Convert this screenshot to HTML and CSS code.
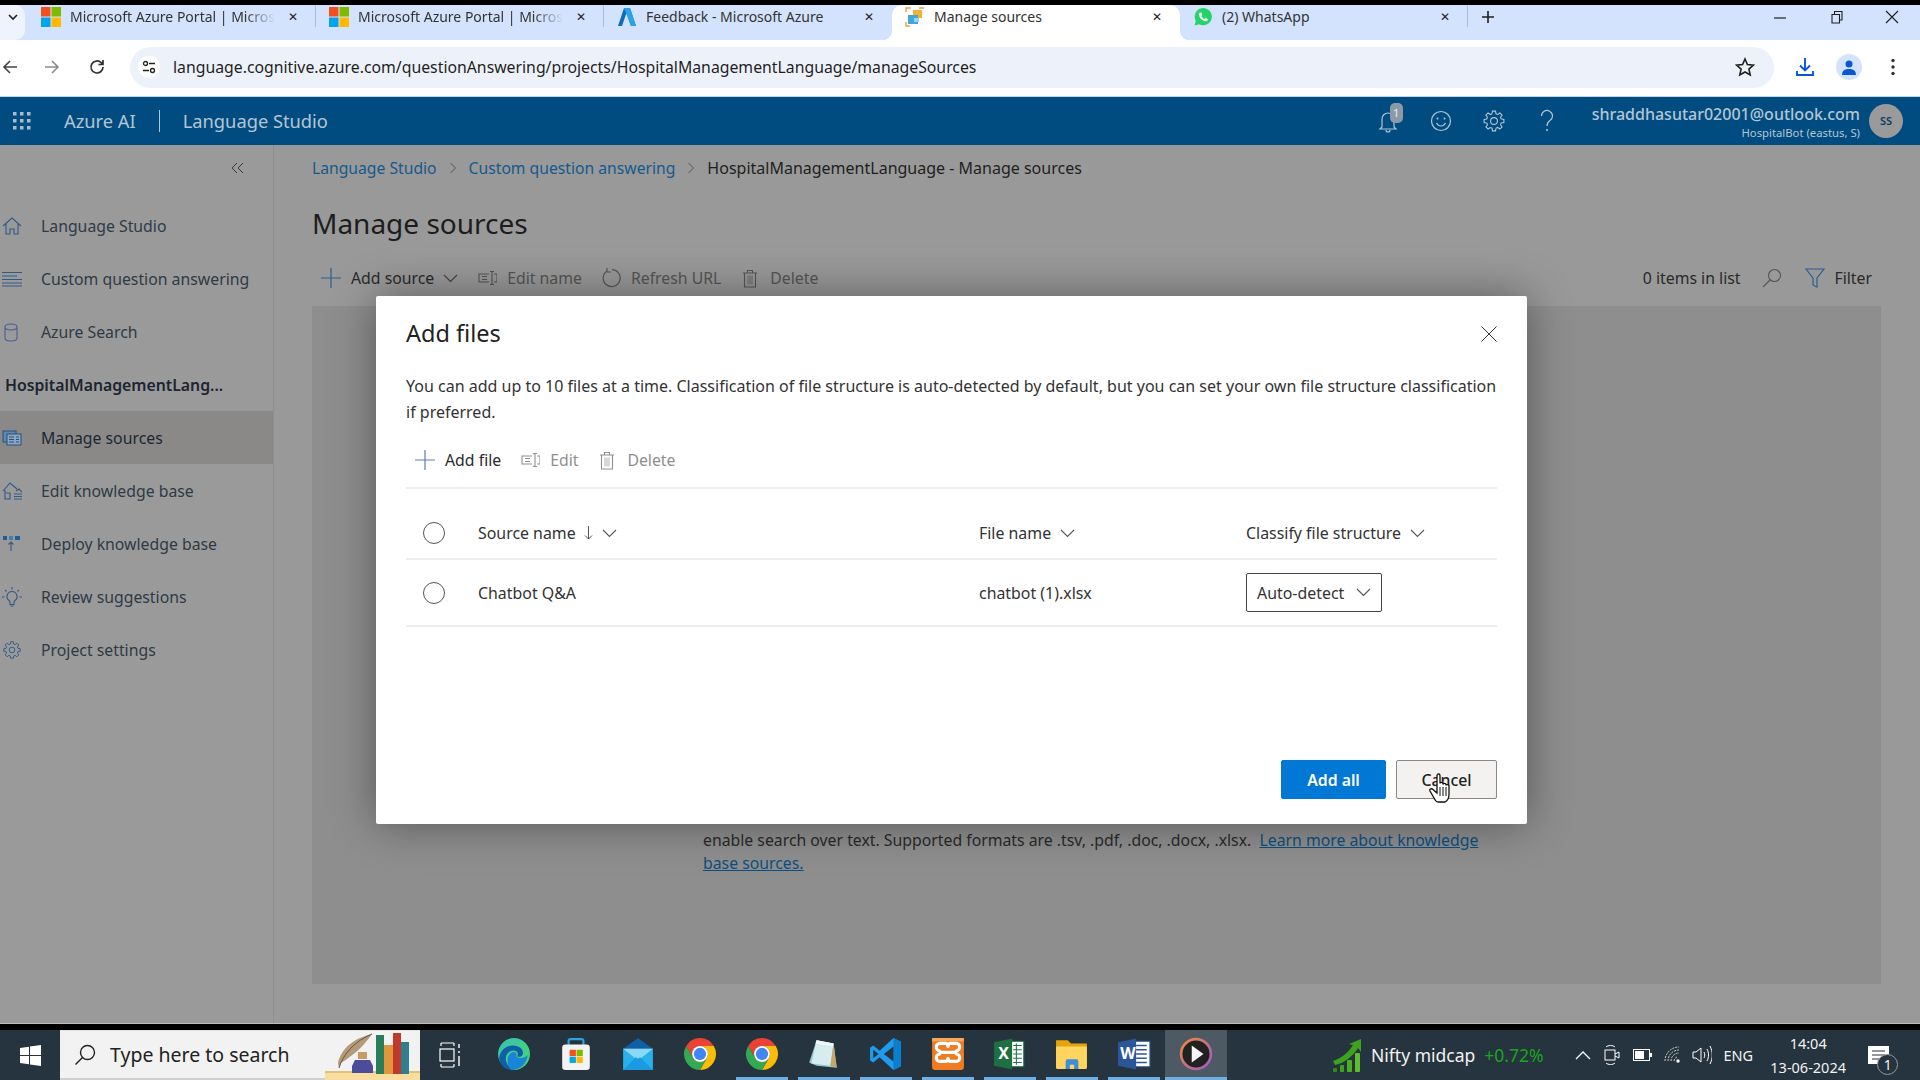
FILE: index.html
```html
<!DOCTYPE html>
<html lang="en">
<head>
<meta charset="utf-8">
<title>Manage sources</title>
<link rel="stylesheet" href="styles.css">
</head>
<body>
<svg class="defs" width="0" height="0" aria-hidden="true">
  <defs>
    <g id="gear-tooth"><path d="M10.06 4.76L10.44 2.12H13.56L13.94 4.76L15.75 5.5"/></g>
    <g id="gear" fill="none" stroke="currentColor" stroke-width="1.1">
      <use href="#gear-tooth"/>
      <use href="#gear-tooth" transform="rotate(45 12 12)"/>
      <use href="#gear-tooth" transform="rotate(90 12 12)"/>
      <use href="#gear-tooth" transform="rotate(135 12 12)"/>
      <use href="#gear-tooth" transform="rotate(180 12 12)"/>
      <use href="#gear-tooth" transform="rotate(225 12 12)"/>
      <use href="#gear-tooth" transform="rotate(270 12 12)"/>
      <use href="#gear-tooth" transform="rotate(315 12 12)"/>
      <circle cx="12" cy="12" r="3.4"/>
    </g>
    <g id="ms"><rect x="0" y="0" width="9.5" height="9.5" fill="#f25022"/><rect x="10.5" y="0" width="9.5" height="9.5" fill="#7fba00"/><rect x="0" y="10.5" width="9.5" height="9.5" fill="#00a4ef"/><rect x="10.5" y="10.5" width="9.5" height="9.5" fill="#ffb900"/></g>
    <g id="trash" fill="none" stroke="currentColor" stroke-width="1.1"><path d="M3.5 5h11v14h-11zM2 5h14M6.5 5V2.5h5V5"/><rect x="6" y="7.5" width="6" height="9" fill="currentColor" opacity=".35" stroke="none"/></g>
    <g id="rename" fill="none" stroke="currentColor" stroke-width="1.1"><path d="M12 4H2v8h10M5 6.5h5M5 9.5h5M15 1.5v13M13 1.5h4M13 14.5h4M17 4h3v8h-3"/></g>
    <path id="chev" d="M1 1l6.5 6.5L14 1" fill="none" stroke="currentColor" stroke-width="1.1"/>
  </defs>
</svg>

<div class="topline"></div>

<div class="tabstrip">
  <div class="tab-menu"><svg width="10" height="7" viewBox="0 0 10 7"><path d="M1 1l4 4 4-4" fill="none" stroke="#1f1f1f" stroke-width="1.6"/></svg></div>
  <div class="tab sep">
    <svg class="fav" viewBox="0 0 20 20"><use href="#ms"/></svg>
    <span class="tab-title fade">Microsoft Azure Portal | Micros</span><span class="tab-x">✕</span>
  </div>
  <div class="tab sep">
    <svg class="fav" viewBox="0 0 20 20"><use href="#ms"/></svg>
    <span class="tab-title fade">Microsoft Azure Portal | Micros</span><span class="tab-x">✕</span>
  </div>
  <div class="tab">
    <svg class="fav" viewBox="0 0 20 20"><path d="M7 1h6l6 18h-5L9.500 6 5 19H1z" fill="#0f6cbd"/><path d="M7 1h6l6 18h-5z" fill="#2aa4e8"/></svg>
    <span class="tab-title">Feedback - Microsoft Azure</span><span class="tab-x">✕</span>
  </div>
  <div class="tab active">
    <svg class="fav" viewBox="0 0 20 20"><path d="M1 5V1h5M14 1h5M1 15v4h4" fill="none" stroke="#f0a040" stroke-width="1.400"/><rect x="8" y="3" width="9" height="8" fill="#f2b233"/><rect x="3" y="8" width="10" height="9" fill="#3fa7dc"/><rect x="9" y="11" width="5" height="4" fill="#9ad3ef"/></svg>
    <span class="tab-title">Manage sources</span><span class="tab-x">✕</span>
  </div>
  <div class="tab sep">
    <svg class="fav" viewBox="0 0 20 20"><path d="M1.500 18.500l1.300-4.600A8.600 8.600 0 1 1 6.200 17.200z" fill="#25d366"/><path d="M7 5.500c-1 .6-1.400 1.900-.8 3.400 1 2.400 2.800 4.300 5.200 5.200 1.400.5 2.700.1 3.200-.9.200-.5.200-1 .1-1.200l-2.300-1.100-1 1.200c-1.400-.6-2.500-1.700-3.100-3l1-1.100-1-2.400z" fill="#fff"/></svg>
    <span class="tab-title">(2) WhatsApp</span><span class="tab-x">✕</span>
  </div>
  <div class="new-tab"><svg width="14" height="14" viewBox="0 0 14 14"><path d="M7 1v12M1 7h12" stroke="#1f1f1f" stroke-width="1.600"/></svg></div>
  <div class="win-ctrls">
    <svg class="win-ic" viewBox="0 0 14 14"><path d="M1 8h12" stroke="#1f1f1f" stroke-width="1.200"/></svg>
    <svg class="win-ic" viewBox="0 0 14 14"><path d="M3 4.500h7.500V13H3zM5.500 4.500V1.500H13V10h-2.500" fill="none" stroke="#1f1f1f" stroke-width="1.100"/></svg>
    <svg class="win-ic" viewBox="0 0 14 14"><path d="M1 1l12 12M13 1L1 13" stroke="#1f1f1f" stroke-width="1.100"/></svg>
  </div>
</div>

<div class="toolbar">
  <div class="nav-btn first"><svg width="16" height="16" viewBox="0 0 16 16"><path d="M15 8H2M8 2L2 8l6 6" fill="none" stroke="#444" stroke-width="1.600"/></svg></div>
  <div class="nav-btn"><svg width="16" height="16" viewBox="0 0 16 16"><path d="M1 8h13M8 2l6 6-6 6" fill="none" stroke="#8a8a8a" stroke-width="1.600"/></svg></div>
  <div class="nav-btn reload"><svg width="18" height="18" viewBox="0 0 18 18"><path d="M15 9a6 6 0 1 1-1.800-4.300L15 6.500M15 2v4.500h-4.500" fill="none" stroke="#333" stroke-width="1.700"/></svg></div>
  <div class="omnibox">
    <div class="site-ic"><svg width="14" height="14" viewBox="0 0 14 14"><circle cx="3.500" cy="3.500" r="2" fill="none" stroke="#1f1f1f" stroke-width="1.300"/><path d="M7 3.500h6M1 10.500h6" stroke="#1f1f1f" stroke-width="1.300"/><circle cx="10.500" cy="10.500" r="2" fill="none" stroke="#1f1f1f" stroke-width="1.300"/></svg></div>
    <span class="url">language.cognitive.azure.com/questionAnswering/projects/HospitalManagementLanguage/manageSources</span>
    <svg class="star" width="20" height="20" viewBox="0 0 20 20"><path d="M10 2l2.400 5.500 6 .6-4.500 4 1.300 5.900L10 15l-5.200 3 1.300-5.900-4.500-4 6-.6z" fill="none" stroke="#1f1f1f" stroke-width="1.600"/></svg>
  </div>
  <div class="tool-btn"><svg width="20" height="20" viewBox="0 0 20 20"><path d="M10 1v12M5 8.500l5 5 5-5M2 14v4h16v-4" fill="none" stroke="#0b57d0" stroke-width="1.900"/></svg></div>
  <div class="tool-btn"><span class="profile"><svg width="14" height="15" viewBox="0 0 14 15"><circle cx="7" cy="4" r="3.500" fill="#0b57d0"/><path d="M0 15c0-4.500 3-6 7-6s7 1.500 7 6z" fill="#0b57d0"/></svg></span></div>
  <div class="tool-btn"><svg width="4" height="18" viewBox="0 0 4 18"><circle cx="2" cy="2.500" r="1.700" fill="#333"/><circle cx="2" cy="9" r="1.700" fill="#333"/><circle cx="2" cy="15.500" r="1.700" fill="#333"/></svg></div>
</div>

<header class="appbar">
  <svg class="waffle" width="18" height="18" viewBox="0 0 18 18"><g fill="#a9bccb"><rect x="0" y="0" width="3.500" height="3.500"/><rect x="7" y="0" width="3.500" height="3.500"/><rect x="14" y="0" width="3.500" height="3.500"/><rect x="0" y="7" width="3.500" height="3.500"/><rect x="7" y="7" width="3.500" height="3.500"/><rect x="14" y="7" width="3.500" height="3.500"/><rect x="0" y="14" width="3.500" height="3.500"/><rect x="7" y="14" width="3.500" height="3.500"/><rect x="14" y="14" width="3.500" height="3.500"/></g></svg>
  <span class="brand">Azure AI</span><span class="brand-sep"></span><span class="brand">Language Studio</span>
  <div class="appbar-right">
    <span class="bar-ic bell">
      <svg width="22" height="24" viewBox="0 0 22 24"><path d="M5 18V10a6 6 0 0 1 12 0v8l2 2H3zM9 21a2 2 0 0 0 4 0" fill="none" stroke="#b4c5d3" stroke-width="1.200"/></svg>
      <span class="bell-badge">1</span>
    </span>
    <span class="bar-ic"><svg width="22" height="22" viewBox="0 0 22 22"><circle cx="11" cy="11" r="9.500" fill="none" stroke="#b4c5d3" stroke-width="1.200"/><circle cx="7.500" cy="8.500" r="1" fill="#b4c5d3"/><circle cx="14.500" cy="8.500" r="1" fill="#b4c5d3"/><path d="M6.500 13c1.200 2.200 2.700 3 4.500 3s3.300-.8 4.500-3" fill="none" stroke="#b4c5d3" stroke-width="1.200"/></svg></span>
    <span class="bar-ic light"><svg width="24" height="24" viewBox="0 0 24 24"><use href="#gear"/></svg></span>
    <span class="bar-ic"><svg width="14" height="24" viewBox="0 0 14 24"><path d="M1.500 7a5.500 5.500 0 1 1 8.500 4.600C8 13 7 14 7 17" fill="none" stroke="#b4c5d3" stroke-width="1.200"/><circle cx="7" cy="21" r="1" fill="#b4c5d3"/></svg></span>
    <div class="account">
      <div class="email">shraddhasutar02001@outlook.com</div>
      <div class="resource">HospitalBot (eastus, S)</div>
    </div>
    <div class="avatar">SS</div>
  </div>
</header>

<div class="workspace">
  <nav class="sidebar">
    <div class="collapse"><svg width="14" height="12" viewBox="0 0 14 12"><path d="M6 1L1 6l5 5M12 1L7 6l5 5" fill="none" stroke="#3a3a3a" stroke-width="1"/></svg></div>
    <a class="side-item"><svg class="side-ic" viewBox="0 0 20 20"><path d="M1 10l9-8 9 8M4 8v10h4v-5h4v5h4V8" fill="none" stroke="#2f5a84" stroke-width="1.100"/></svg>Language Studio</a>
    <a class="side-item"><svg class="side-ic" viewBox="0 0 20 20"><path d="M0 3.500h20M0 7h15M0 10.500h20M0 14h20M0 17h20" stroke="#2f5a84" stroke-width="1.100"/></svg>Custom question answering</a>
    <a class="side-item"><svg class="side-ic" viewBox="0 0 20 20"><path d="M3 5v11c0 2 2 3 6 3s6-1 6-3V5M3 5c0-2 2-3 6-3s6 1 6 3-2 3-6 3-6-1-6-3z" fill="none" stroke="#4a5f96" stroke-width="1.100"/></svg>Azure Search</a>
    <div class="side-project">HospitalManagementLang...</div>
    <a class="side-item current"><svg class="side-ic" viewBox="0 0 20 20"><rect x="1" y="3" width="13" height="11" fill="#5f87b0" stroke="#24527e"/><rect x="5" y="6" width="14" height="11" fill="#8aa6c0" stroke="#24527e"/><path d="M7 9h5M7 11.500h5M7 14h5M14 9h3M14 11.500h3M14 14h3" stroke="#24527e"/></svg>Manage sources</a>
    <a class="side-item"><svg class="side-ic" viewBox="0 0 20 20"><path d="M1 10l7-8 7 6M3 9v9h5v-6H4M12 13h8M12 15.500h8M12 18h8M14 10l3-2 3 3" fill="none" stroke="#2f5a84" stroke-width="1.100"/></svg>Edit knowledge base</a>
    <a class="side-item"><svg class="side-ic" viewBox="0 0 20 20"><rect x="1" y="2" width="4" height="4" fill="#1d5f96"/><rect x="7" y="2" width="4" height="4" fill="#4e7ca3"/><rect x="13" y="2" width="5" height="4" fill="#1d5f96"/><path d="M9 17V8M6.500 10.500L9 8l2.500 2.500" fill="none" stroke="#2f5a84" stroke-width="1.100"/></svg>Deploy knowledge base</a>
    <a class="side-item"><svg class="side-ic" viewBox="0 0 20 20"><path d="M10 4.500a5 5 0 0 0-3 9c.7.6 1 1.200 1 2v2h4v-2c0-.8.300-1.400 1-2a5 5 0 0 0-3-9zM8.500 19h3M10 0v2.500M3 3l1.500 1.500M17 3l-1.500 1.500M0 10h2.500M20 10h-2.500" fill="none" stroke="#2f5a84" stroke-width="1.100"/></svg>Review suggestions</a>
    <a class="side-item"><svg class="side-ic gear-blue" viewBox="0 0 24 24"><use href="#gear"/></svg>Project settings</a>
  </nav>

  <main class="content">
    <div class="crumbs">
      <a class="crumb-link">Language Studio</a>
      <svg class="crumb-sep" width="8" height="12" viewBox="0 0 8 12"><path d="M1.500 1l5 5-5 5" fill="none" stroke="#555" stroke-width="1"/></svg>
      <a class="crumb-link">Custom question answering</a>
      <svg class="crumb-sep" width="8" height="12" viewBox="0 0 8 12"><path d="M1.500 1l5 5-5 5" fill="none" stroke="#555" stroke-width="1"/></svg>
      <span class="crumb-here">HospitalManagementLanguage - Manage sources</span>
    </div>
    <h1 class="page-title">Manage sources</h1>
    <div class="commands">
      <span class="cmd"><svg class="cmd-ic" viewBox="0 0 20 20"><path d="M10 0v20M0 10h20" stroke="#2a5f8c" stroke-width="1.200"/></svg>Add source</span>
      <svg class="cmd-chev" viewBox="0 0 15 9"><use href="#chev"/></svg>
      <span class="cmd off"><svg class="cmd-ic" viewBox="0 0 20 16"><use href="#rename"/></svg>Edit name</span>
      <span class="cmd off"><svg class="cmd-ic" viewBox="0 0 20 20"><path d="M6 3a8.500 8.500 0 1 0 5-1.400M6 0v4h4" fill="none" stroke="currentColor" stroke-width="1.200"/></svg>Refresh URL</span>
      <span class="cmd off"><svg class="cmd-ic" viewBox="0 0 18 20"><use href="#trash"/></svg>Delete</span>
      <span class="cmd-right">
        <span class="count">0 items in list</span>
        <svg class="find-ic" viewBox="0 0 20 20"><circle cx="12.500" cy="7.500" r="6" fill="none" stroke="#555" stroke-width="1.100"/><path d="M8 12l-7 7" stroke="#555" stroke-width="1.100"/></svg>
        <span class="cmd"><svg class="cmd-ic" viewBox="0 0 20 20"><path d="M1 1h18l-7 9v9l-4-2v-7z" fill="none" stroke="#2a5f8c" stroke-width="1.200"/></svg>Filter</span>
      </span>
    </div>
    <section class="panel">
      <p class="panel-text">enable search over text. Supported formats are .tsv, .pdf, .doc, .docx, .xlsx.&nbsp; <a class="panel-link">Learn more about knowledge</a> <a class="panel-link">base sources.</a></p>
    </section>
  </main>
</div>

<div class="blackline"></div>

<footer class="taskbar">
  <div class="start"><svg width="21" height="21" viewBox="0 0 21 21"><path d="M0 3l9-1.300V10H0zM10 1.500L21 0v10H10zM0 11h9v8.300L0 18zM10 11h11v10l-11-1.500z" fill="#fff"/></svg></div>
  <div class="search">
    <svg width="22" height="22" viewBox="0 0 22 22"><circle cx="13.500" cy="8.500" r="7" fill="none" stroke="#222" stroke-width="1.400"/><path d="M8.500 13.500L1.500 20.500" stroke="#222" stroke-width="1.400"/></svg>
    <span class="search-text">Type here to search</span>
    <svg class="books" width="95" height="50" viewBox="0 0 95 50"><rect x="0" y="41" width="95" height="9" fill="#f7dd9f"/><rect x="0" y="41" width="95" height="2" fill="#e3c278"/><path d="M13 33C16 20 26 9 47 4c-8 12-17 20-31 29l-2 5z" fill="#b49a78"/><path d="M14 38C18 24 30 11 47 4" fill="none" stroke="#6a5640" stroke-width="1"/><rect x="33" y="22" width="9" height="7" fill="#c79a68"/><path d="M30 30h15l3 6v7H27v-7z" fill="#4c4c9a"/><rect x="51" y="5" width="8" height="39" fill="#2a7d5a"/><rect x="59" y="15" width="9" height="29" fill="#e0963a"/><rect x="68" y="3" width="8" height="41" fill="#c0392b"/><rect x="76" y="12" width="8" height="32" fill="#2f7f8f"/></svg>
  </div>
  <div class="task-view"><svg width="22" height="26" viewBox="0 0 22 26"><path d="M2 1h13M2 25h13M2 1v3M15 1v3M2 22v3M15 22v3" fill="none" stroke="#fff" stroke-width="1.200"/><rect x="1" y="7" width="14" height="12" fill="none" stroke="#fff" stroke-width="1.200"/><path d="M20 2v4M20 9v2M20 14v10" stroke="#fff" stroke-width="1.400"/></svg></div>

  <div class="app"><svg class="app-ic" viewBox="0 0 32 32"><defs><linearGradient id="eg1" x1="0" y1="0" x2="1" y2="1"><stop offset="0" stop-color="#35c1b4"/><stop offset="1" stop-color="#4ad96b"/></linearGradient></defs><circle cx="16" cy="16" r="15" fill="url(#eg1)"/><path d="M2 20C3 12 9 8 15 8c6 0 11 4 9 9-1 2-4 2-5 1 2-3-1-6-5-5-5 1-7 6-5 11 1 3 4 6 8 7C8 32 3 27 2 20z" fill="#0f5ea8"/><path d="M10 22c0-5 3-8 6-8 2 0 3 2 2 4 3 3 8 2 11-1-1 8-7 14-15 14-3-2-4-5-4-9z" fill="#1a84d6"/></svg></div>
  <div class="app"><svg class="app-ic" viewBox="0 0 32 32"><path d="M9 9V4a2 2 0 0 1 2-2h10a2 2 0 0 1 2 2v5" fill="none" stroke="#2ba4e0" stroke-width="2"/><rect x="3" y="7" width="26" height="24" rx="3" fill="#f3f3f3"/><g transform="translate(10 12) scale(.62)"><use href="#ms"/></g></svg></div>
  <div class="app"><svg class="app-ic" viewBox="0 0 32 32"><path d="M2 11L16 1l14 10z" fill="#0f5ea8"/><rect x="2" y="11" width="28" height="20" fill="#2bb0ee"/><path d="M2 11l14 11 14-11z" fill="#8ad8f8"/><path d="M2 31l12-12 2 1.500 2-1.500 12 12z" fill="#1a9ae0"/></svg></div>
  <div class="app"><svg class="app-ic" viewBox="0 0 32 32"><use href="#chrome"/></svg></div>
  <div class="app open"><svg class="app-ic" viewBox="0 0 32 32"><g id="chrome"><path d="M3 8.500A15 15 0 0 1 29 8.500L16 8.500A7.500 7.500 0 0 0 9.500 19.750Z" fill="#ea4335"/><path d="M29 8.500A15 15 0 0 1 16 31L22.500 19.750A7.500 7.500 0 0 0 16 8.500Z" fill="#fbbc04"/><path d="M16 31A15 15 0 0 1 3 8.500L9.500 19.750A7.500 7.500 0 0 0 22.500 19.750Z" fill="#34a853"/><circle cx="16" cy="16" r="7.500" fill="#fff"/><circle cx="16" cy="16" r="5.800" fill="#4285f4"/></g></svg></div>
  <div class="app open"><svg class="app-ic" viewBox="0 0 32 32"><path d="M9 3l16 3 3 23-19-2-7-3z" fill="#8fc6d0"/><path d="M9 3l16 3-3 21-18-2z" fill="#d6ecef"/><path d="M25 6l3 23-6-2z" fill="#c8a869"/><path d="M9 3l16 3-.6 3L8 6z" fill="#eef6f7"/></svg></div>
  <div class="app open"><svg class="app-ic" viewBox="0 0 32 32"><path d="M23 1l7 3.500v23L23 31 10 19l-6 5-3-2v-12l3-2 6 5z" fill="#1f9cf0"/><path d="M23 1l7 3.500v23L23 31z" fill="#0a7fd0"/><path d="M23 9v14l-9-7z" fill="#25343e"/><path d="M4 12l5 4-5 4z" fill="#25343e"/></svg></div>
  <div class="app open"><svg class="app-ic" viewBox="0 0 32 32"><rect x="1" y="1" width="30" height="30" rx="3" fill="#f07b22"/><rect x="1" y="1" width="30" height="3" fill="#f9a65f"/><path d="M14 6H9a3.500 3.500 0 0 0-1 7c1 .5 1 2.500 0 3a3.500 3.500 0 0 0 1 7h5c2 0 1.500-3 2-3s0 3 2 3h5a3.500 3.500 0 0 0 1-7c-1-.5-1-2.500 0-3a3.500 3.500 0 0 0-1-7h-5c-2 0-1.500 3-2 3s0-3-2-3zM9 14.500h14" fill="none" stroke="#fff" stroke-width="3"/></svg></div>
  <div class="app open"><svg class="app-ic" viewBox="0 0 32 32"><path d="M16 4h13v24H16z" fill="#fff" stroke="#17693a"/><path d="M19 8h8M19 12h8M19 16h8M19 20h8M19 24h8M22 6v20" stroke="#217346"/><path d="M1 5l17-3.500v29L1 27z" fill="#1e6f42"/><text class="app-letter" x="5" y="21">X</text></svg></div>
  <div class="app open"><svg class="app-ic" viewBox="0 0 32 32"><path d="M1 3h11l3 3h15v22a2 2 0 0 1-2 2H3a2 2 0 0 1-2-2z" fill="#e5a50a"/><path d="M1 9h29v20a1 1 0 0 1-1 1H2a1 1 0 0 1-1-1z" fill="#ffd55f"/><path d="M10 30v-7a2 2 0 0 1 2-2h8a2 2 0 0 1 2 2v7h-4v-4h-4v4z" fill="#3c8fd8"/></svg></div>
  <div class="app open"><svg class="app-ic" viewBox="0 0 32 32"><path d="M16 4h15v24H16z" fill="#fff" stroke="#2b579a"/><path d="M18 8h10M18 12h10M18 16h10M18 20h10M18 24h10" stroke="#2b579a" stroke-width="1.500"/><path d="M1 5l17-3.500v29L1 27z" fill="#2b579a"/><text class="app-letter" x="3" y="21">W</text></svg></div>
  <div class="app open hot"><svg class="app-ic" viewBox="0 0 32 32"><defs><linearGradient id="pg1" x1="0" y1="0" x2="1" y2="1"><stop offset="0" stop-color="#ef8a3c"/><stop offset="1" stop-color="#9a5bc4"/></linearGradient></defs><circle cx="16" cy="16" r="14" fill="#222" stroke="url(#pg1)" stroke-width="2.500"/><path d="M12 8l11 8-11 8z" fill="#f5f5f5"/></svg></div>

  <div class="tray">
    <svg class="nifty-ic" width="30" height="34" viewBox="0 0 30 34"><path d="M1 23C10 20 17 14 21 7l-4-1 12-5v13l-3-4C21 18 13 25 3 27z" fill="#3da31f"/><rect x="1" y="30" width="4" height="4" rx="1" fill="#2e8b1d"/><rect x="8" y="27" width="4" height="7" rx="1" fill="#3da31f"/><rect x="15" y="22" width="5" height="12" rx="1" fill="#4caf22"/><rect x="23" y="15" width="5" height="19" rx="1" fill="#5cbf2a"/></svg>
    <span class="nifty">Nifty midcap</span><span class="nifty-pct">+0.72%</span>
    <svg class="tray-ic first" width="16" height="10" viewBox="0 0 16 10"><path d="M1 9l7-7 7 7" fill="none" stroke="#fff" stroke-width="1.300"/></svg>
    <svg class="tray-ic wide" width="16" height="22" viewBox="0 0 16 22"><path d="M2 3c2-2 7-2 9 0M2 19c2 2 7 2 9 0" fill="none" stroke="#fff"/><rect x="1" y="6" width="10" height="10" fill="none" stroke="#fff"/><path d="M11 10l4-2v6l-4-2" fill="none" stroke="#fff"/></svg>
    <svg class="tray-ic wide" width="19" height="12" viewBox="0 0 19 12"><rect x=".5" y=".5" width="16" height="11" fill="none" stroke="#fff"/><rect x="2" y="2" width="9" height="8" fill="#fff"/><rect x="17" y="4" width="2" height="4" fill="#fff"/></svg>
    <svg class="tray-ic" width="18" height="18" viewBox="0 0 18 18"><path d="M1 15A14 14 0 0 1 15 1M4 15A11 11 0 0 1 15 4M7 15a8 8 0 0 1 8-8M10 15a5 5 0 0 1 3-4" fill="none" stroke="#d5d5d5" stroke-dasharray="2 1"/><circle cx="14" cy="15" r="1.700" fill="#fff"/></svg>
    <svg class="tray-ic tight" width="20" height="20" viewBox="0 0 20 20"><path d="M1 7h3l5-4v14l-5-4H1zM12 7c1 2 1 4 0 6M15 4c2 4 2 8 0 12M18 1c3 6 3 12 0 18" fill="none" stroke="#fff"/></svg>
    <span class="lang">ENG</span>
    <div class="clock"><div>14:04</div><div>13-06-2024</div></div>
    <div class="notif">
      <svg width="21" height="18" viewBox="0 0 21 18"><rect width="21" height="18" fill="#fff"/><path d="M4 5h13M4 9h13M4 13h9" stroke="#25343e" stroke-width="1.200"/></svg>
      <span class="notif-badge">1</span>
    </div>
  </div>
</footer>

<div class="dialog" role="dialog">
  <div class="dlg-head">
    <h2 class="dlg-title">Add files</h2>
    <svg width="16" height="16" viewBox="0 0 16 16"><path d="M.5.500l15 15M15.500.500l-15 15" stroke="#333" stroke-width="1"/></svg>
  </div>
  <p class="dlg-desc">You can add up to 10 files at a time. Classification of file structure is auto-detected by default, but you can set your own file structure classification if preferred.</p>
  <div class="dlg-cmds">
    <span class="dcmd"><svg class="dcmd-ic" viewBox="0 0 20 20"><path d="M10 0v20M0 10h20" stroke="#5b7fb5" stroke-width="1.200"/></svg>Add file</span>
    <span class="dcmd off"><svg class="dcmd-ic" viewBox="0 0 20 16"><use href="#rename"/></svg>Edit</span>
    <span class="dcmd off"><svg class="dcmd-ic" viewBox="0 0 18 20"><use href="#trash"/></svg>Delete</span>
  </div>
  <div class="grid-table">
    <div class="cell head"><span class="radio"></span></div>
    <div class="cell head">Source name<svg class="sort" width="9" height="14" viewBox="0 0 9 14"><path d="M4.500 0v13M1 9.500l3.500 3.500L8 9.500" fill="none" stroke="#555"/></svg><svg class="col-chev" viewBox="0 0 15 9"><use href="#chev"/></svg></div>
    <div class="cell head">File name<svg class="col-chev" viewBox="0 0 15 9"><use href="#chev"/></svg></div>
    <div class="cell head">Classify file structure<svg class="col-chev" viewBox="0 0 15 9"><use href="#chev"/></svg></div>
    <div class="cell row"><span class="radio"></span></div>
    <div class="cell row">Chatbot Q&amp;A</div>
    <div class="cell row">chatbot (1).xlsx</div>
    <div class="cell row"><span class="select">Auto-detect<svg class="select-chev" viewBox="0 0 15 9"><use href="#chev"/></svg></span></div>
  </div>
  <div class="dlg-foot">
    <button class="btn primary">Add all</button>
    <button class="btn">Cancel</button>
  </div>
</div>

<svg class="hand" width="24" height="30" viewBox="0 0 24 30"><path d="M8 2.500c0-2 3-2 3 0v8c0-1.500 3-1.500 3 0v1c0-1.500 3-1.500 3 0v1c0-1.300 3-1.300 3 .5V21c0 4-2 7-4 8H9c-2 0-3-2-4-4l-4-7c-.8-2 1.500-3 3-1.500L8 20z" fill="#fff" stroke="#111" stroke-width="1.300"/><path d="M11 14v9M14 14v9M17 14v9" stroke="#111"/></svg>
</body>
</html>
```
FILE: styles.css
```css
* { box-sizing: border-box; }
html, body { margin: 0; padding: 0; }
body {
  position: relative;
  width: 1920px;
  height: 1080px;
  overflow: hidden;
  display: flex;
  flex-direction: column;
  background: #999;
  color: #222;
  font-family: "Noto Sans", "Open Sans", sans-serif;
  font-size: 15px;
}
.defs { position: absolute; }
a { color: inherit; text-decoration: none; }

.topline { height: 5px; background: #000; flex: none; }

/* browser tab strip */
.tabstrip {
  flex: none;
  height: 35px;
  display: flex;
  align-items: stretch;
  background: #d3e3fd;
}
.tab-menu {
  width: 25px;
  margin-right: 3px;
  padding-bottom: 10px;
  display: flex;
  align-items: center;
  justify-content: center;
  background: #eef3fd;
  border-radius: 0 10px 10px 0;
}
.tab {
  position: relative;
  width: 288px;
  padding: 0 17px 12px 13px;
  display: flex;
  align-items: center;
  gap: 9px;
  font-size: 14px;
  color: #333;
}
.tab.sep::after {
  content: "";
  position: absolute;
  right: 0;
  top: 0;
  height: 22px;
  width: 1px;
  background: #a9bfdc;
}
.tab.active { background: #fff; border-radius: 10px 10px 0 0; }
.tab.active::before, .tab.active::after {
  content: "";
  position: absolute;
  bottom: 0;
  width: 10px;
  height: 10px;
}
.tab.active::before { left: -10px; background: radial-gradient(circle at 0 0, transparent 10px, #fff 10.500px); }
.tab.active::after { right: -10px; background: radial-gradient(circle at 100% 0, transparent 10px, #fff 10.500px); }
.fav { width: 20px; height: 20px; flex: none; }
.tab-title { flex: 1; min-width: 0; white-space: nowrap; }
.fade { -webkit-mask-image: linear-gradient(90deg, #000 175px, transparent 205px); mask-image: linear-gradient(90deg, #000 175px, transparent 205px); }
.tab-x { flex: none; width: 12px; font-size: 12px; line-height: 12px; text-align: center; color: #222; }
.new-tab { width: 40px; padding-bottom: 12px; display: flex; align-items: center; justify-content: center; }
.win-ctrls { margin-left: auto; display: flex; padding: 0 0 12px 0; align-items: center; }
.win-ic { width: 14px; height: 14px; margin-right: 42px; }
.win-ic:last-child { margin-right: 21px; }

/* browser toolbar */
.toolbar {
  flex: none;
  height: 57px;
  display: flex;
  align-items: center;
  padding-right: 5px;
  background: #fff;
  border-bottom: 1px solid #c4d4e4;
  padding-bottom: 2px;
}
.nav-btn { width: 42px; display: flex; justify-content: center; }
.nav-btn.first { margin-left: -11px; }
.nav-btn.reload { padding-left: 5px; }
.omnibox {
  flex: 1;
  height: 41px;
  margin-left: 15px;
  padding: 0 19px 0 8px;
  display: flex;
  align-items: center;
  background: #edf2fa;
  border-radius: 21px;
}
.site-ic { width: 22px; height: 22px; border-radius: 50%; background: #fff; display: flex; align-items: center; justify-content: center; }
.url { flex: 1; margin-left: 13px; font-size: 15.800px; color: #1f1f1f; white-space: nowrap; }
.tool-btn { width: 44px; display: flex; justify-content: center; }
.omnibox + .tool-btn { margin-left: 9px; }
.profile { width: 26px; height: 26px; border-radius: 50%; background: #d3e3fd; display: flex; align-items: center; justify-content: center; }

/* app header */
.appbar {
  flex: none;
  height: 48px;
  display: flex;
  align-items: center;
  padding-left: 13px;
  background: #004c80;
  color: #b4c5d3;
}
.brand { margin-bottom: 1px; font-size: 18.300px; }
.waffle { margin-right: 33px; }
.brand-sep { width: 1px; height: 22px; margin: 0 23px; background: #b4c5d3; }
.appbar-right { margin-left: auto; display: flex; align-items: center; height: 100%; padding-right: 17px; }
.bar-ic { position: relative; width: 53px; display: flex; justify-content: center; }
.bar-ic.light { color: #b4c5d3; }
.bell-badge {
  position: absolute;
  left: 28px;
  top: -6px;
  width: 13px;
  height: 20px;
  border-radius: 5px;
  background: #8b9aa6;
  color: #eee;
  font-size: 11px;
  line-height: 20px;
  text-align: center;
}
.account { margin-left: 18px; text-align: right; }
.email { font-size: 16px; line-height: 22px; font-weight: 500; }
.resource { font-size: 11.300px; line-height: 15px; }
.avatar {
  width: 34px;
  height: 34px;
  margin-left: 9px;
  border-radius: 50%;
  background: #9a9a9a;
  color: #0c3d63;
  font-size: 11px;
  font-weight: 600;
  line-height: 34px;
  text-align: center;
}

/* page */
.workspace { flex: 1; min-height: 0; display: flex; }
.sidebar {
  flex: none;
  width: 274px;
  border-right: 1px solid #8e8e8e;
  background: #9a9a9a;
}
.collapse { height: 54px; padding: 0 28px 8px 0; display: flex; align-items: center; justify-content: flex-end; }
.side-item, .side-project {
  height: 53px;
  display: flex;
  align-items: center;
  color: #2e3a46;
  font-size: 15.800px;
}
.side-item { padding-left: 2px; }
.side-ic { width: 20px; height: 20px; margin-right: 19px; flex: none; }
.gear-blue { color: #2f5a84; }
.side-project { padding-left: 5px; color: #1c2530; font-weight: 600; }
.current { background: #8b8987; color: #1d2733; }

.content {
  flex: 1;
  min-width: 0;
  padding: 0 39px 0 38px;
  display: flex;
  flex-direction: column;
}
.crumbs { flex: none; height: 46px; display: flex; align-items: center; font-size: 15.700px; }
.crumb-link { color: #155a8c; }
.crumb-sep { margin: 0 12px; }
.crumb-here { color: #1f1f1f; font-size: 16px; }
.page-title { flex: none; height: 64px; margin: 0; font-size: 28px; font-weight: 400; line-height: 64px; color: #1d1d1d; }
.commands { flex: none; height: 46px; display: flex; align-items: center; padding-left: 9px; font-size: 15.800px; color: #2a2a2a; }
.cmd { display: flex; align-items: center; }
.cmd.off { color: #555; margin-left: 19px; }
.cmd-ic { width: 20px; height: 20px; margin-right: 10px; }
.cmd-chev { width: 15px; height: 9px; margin-left: 9px; color: #444; }
.cmd-right { margin-left: auto; display: flex; align-items: center; padding-right: 9px; }
.count { color: #2a2a2a; }
.find-ic { width: 20px; height: 20px; margin: 0 23px 0 21px; }
.panel {
  flex: 1;
  min-height: 0;
  margin: 5px 0 39px;
  padding: 523px 0 0 391px;
  background: #8e8e8e;
}
.panel-text { width: 790px; margin: 0; font-size: 15.800px; line-height: 23px; color: #2a2a2a; }
.panel-link { color: #0f4f80; text-decoration: underline; }

.blackline { flex: none; height: 7px; background: #000; border-top: 1px solid #bdbdbd; }

/* taskbar */
.taskbar {
  flex: none;
  height: 50px;
  display: flex;
  align-items: stretch;
  background: #25343e;
}
.start { width: 60px; display: flex; align-items: center; justify-content: center; }
.search {
  position: relative;
  width: 360px;
  padding-left: 14px;
  display: flex;
  align-items: center;
  background: #f2f2f2;
  border-bottom: 2px solid #cfcfcf;
  border-top: 1px solid #e4e4e4;
}
.search-text { margin-left: 14px; font-size: 19.500px; color: #222; white-space: nowrap; }
.books { position: absolute; right: 0; bottom: -2px; }
.task-view { width: 63px; padding-right: 4px; display: flex; align-items: center; justify-content: center; }
.app { position: relative; width: 62px; display: flex; align-items: center; justify-content: center; padding-bottom: 2px; }
.app-ic { width: 34px; height: 34px; }
.app.open::after {
  content: "";
  position: absolute;
  left: 5px;
  right: 5px;
  bottom: 0;
  height: 3px;
  background: #6cb0e6;
}
.hot { background: #4e5a63; }
.app.hot::after { left: 0; right: 0; }
.app-letter { font-size: 15px; font-weight: 700; fill: #fff; }

.tray { flex: 1; display: flex; align-items: center; padding-left: 105px; color: #f2f2f2; }
.nifty { margin-left: 9px; font-size: 17.500px; white-space: nowrap; }
.nifty-pct { margin-left: 9px; font-size: 17.500px; color: #1aa51a; white-space: nowrap; }
.tray-ic { margin-left: 12px; flex: none; }
.tray-ic.first { margin-left: 31px; }
.tray-ic.wide { margin-left: 13px; }
.tray-ic.tight { margin-left: 10px; }
.lang { margin-left: 12px; font-size: 14.500px; }
.clock { width: 96px; margin-left: 7px; font-size: 14.500px; line-height: 24px; text-align: center; }
.notif { position: relative; margin-left: 12px; display: flex; align-items: center; }
.notif-badge {
  position: absolute;
  left: 9px;
  top: 8px;
  width: 21px;
  height: 21px;
  border: 1px solid #999;
  border-radius: 50%;
  background: #25343e;
  font-size: 14px;
  line-height: 19px;
  text-align: center;
}

/* dialog over the page */
.dialog {
  position: absolute;
  left: 376px;
  top: 296px;
  width: 1151px;
  height: 528px;
  padding: 0 30px;
  display: flex;
  flex-direction: column;
  background: #fff;
  border-radius: 2px;
  box-shadow: 0 0 45px rgba(0, 0, 0, .4);
}
.dlg-head { flex: none; height: 76px; display: flex; align-items: center; justify-content: space-between; }
.dlg-title { margin: 0 0 2px; font-size: 23.500px; font-weight: 400; color: #222; }
.dlg-desc { flex: none; margin: 1px 0 0; font-size: 16px; line-height: 26px; color: #333; }
.dlg-cmds { flex: none; height: 46px; margin-top: 12px; padding-left: 9px; display: flex; align-items: center; font-size: 15.800px; color: #2a2a2a; }
.dcmd { display: flex; align-items: center; margin-right: 19px; }
.dcmd.off { color: #8f8f8f; }
.dcmd-ic { width: 20px; height: 20px; margin-right: 10px; }
.grid-table {
  flex: none;
  margin-top: 4px;
  border-top: 2px solid #eee;
  display: grid;
  grid-template-columns: 72px 501px 267px 1fr;
  font-size: 15.900px;
  color: #333;
}
.cell { display: flex; align-items: center; }
.cell.head { height: 71px; padding-top: 19px; border-bottom: 2px solid #eee; }
.cell.row { height: 67px; border-bottom: 2px solid #eee; }
.radio { width: 22px; height: 22px; margin-left: 17px; border: 1.500px solid #555; border-radius: 50%; }
.sort { margin-left: 8px; }
.col-chev { width: 15px; height: 9px; margin-left: 9px; color: #555; }
.select {
  width: 136px;
  height: 39px;
  padding: 0 10px;
  display: flex;
  align-items: center;
  justify-content: space-between;
  border: 1px solid #444;
  border-radius: 2px;
}
.select-chev { width: 15px; height: 9px; color: #555; }
.dlg-foot { margin-top: auto; padding-bottom: 25px; display: flex; justify-content: flex-end; gap: 10px; }
.btn {
  width: 101px;
  height: 39px;
  padding: 0;
  border: 1px solid #8a8886;
  border-radius: 2px;
  background: #f3f2f1;
  color: #222;
  font: inherit;
  font-size: 15.800px;
  font-weight: 500;
}
.btn.primary { width: 105px; border-color: #0078d4; background: #0078d4; color: #fff; font-weight: 600; }
.hand { position: absolute; left: 1429px; top: 773px; }
```
